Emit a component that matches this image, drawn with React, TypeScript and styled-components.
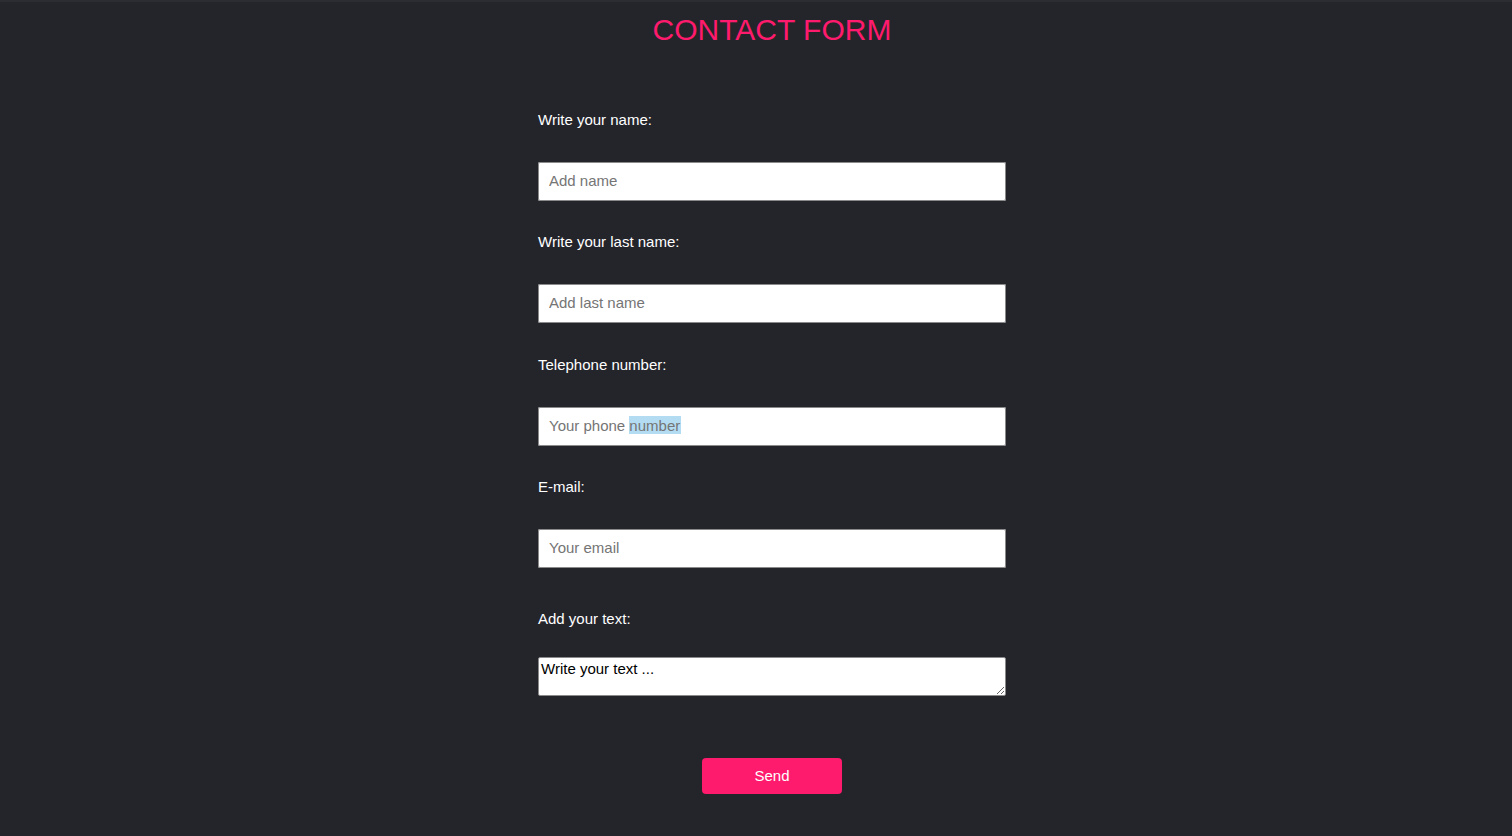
import React from "react";
import styled, { createGlobalStyle } from "styled-components";

const GlobalStyle = createGlobalStyle`
  html, body {
    margin: 0;
    padding: 0;
    background: #24252b;
  }
  body {
    font-family: "Liberation Sans", Arial, sans-serif;
    border-top: 2px solid #2b2d33;
    min-height: 834px;
  }
`;

const Page = styled.main`
  display: flex;
  flex-direction: column;
  align-items: center;
  padding-left: 32px;
`;

const Title = styled.h1`
  margin: 10px 0 0;
  font-family: "Liberation Sans", Arial, sans-serif;
  font-weight: 400;
  font-size: 30px;
  line-height: 35px;
  color: #fe1a6c;
`;

const Form = styled.form`
  width: 468px;
  margin-top: 64px;
  display: flex;
  flex-direction: column;
`;

const Field = styled.div<{ $extraTop?: number }>`
  display: flex;
  flex-direction: column;
  margin-top: ${(p) => p.$extraTop ?? 0}px;
  margin-bottom: 32.4px;
`;

const Label = styled.label<{ $gap?: number }>`
  color: #ffffff;
  font-size: 15px;
  line-height: 18px;
  margin-bottom: ${(p) => p.$gap ?? 33}px;
`;

const InputBox = styled.div`
  position: relative;
  height: 39px;
  background: #ffffff;
  border-radius: 2px;
`;

const Input = styled.input`
  position: relative;
  box-sizing: border-box;
  width: 100%;
  height: 39px;
  margin: 0;
  padding: 0 10px 2px;
  border: 1px solid #8a8a8a;
  border-radius: 2px;
  background: transparent;
  font-family: "Liberation Sans", Arial, sans-serif;
  font-size: 15px;
  color: #000;
  outline: none;
  &::placeholder {
    color: #757575;
    opacity: 1;
  }
`;

const Highlight = styled.span`
  position: absolute;
  left: 91px;
  top: 9px;
  width: 52px;
  height: 18px;
  background: #b3dcf3;
`;

const TextArea = styled.textarea`
  box-sizing: border-box;
  width: 100%;
  height: 39px;
  margin: 0;
  padding: 2px;
  border: 1px solid #8a8a8a;
  border-radius: 2px;
  background: #ffffff;
  font-family: "Liberation Sans", Arial, sans-serif;
  font-size: 15px;
  line-height: 17px;
  color: #000;
  outline: none;
  resize: vertical;
  display: block;
`;

const ButtonRow = styled.div`
  display: flex;
  justify-content: center;
  margin-top: 30px;
`;

const SendButton = styled.button`
  width: 140px;
  height: 36px;
  border: none;
  border-radius: 4px;
  background: #fe1a6c;
  color: #ffffff;
  font-family: "Liberation Sans", Arial, sans-serif;
  font-size: 15px;
  cursor: pointer;
`;

export default function App() {
  return (
    <>
      <GlobalStyle />
      <Page>
        <Title>CONTACT FORM</Title>
        <Form onSubmit={(e) => e.preventDefault()}>
          <Field>
            <Label htmlFor="name">Write your name:</Label>
            <InputBox>
              <Input id="name" placeholder="Add name" />
            </InputBox>
          </Field>
          <Field>
            <Label htmlFor="last">Write your last name:</Label>
            <InputBox>
              <Input id="last" placeholder="Add last name" />
            </InputBox>
          </Field>
          <Field>
            <Label htmlFor="phone">Telephone number:</Label>
            <InputBox>
              <Highlight />
              <Input id="phone" placeholder="Your phone number" />
            </InputBox>
          </Field>
          <Field>
            <Label htmlFor="email">E-mail:</Label>
            <InputBox>
              <Input id="email" placeholder="Your email" />
            </InputBox>
          </Field>
          <Field $extraTop={9}>
            <Label htmlFor="text" $gap={29}>Add your text:</Label>
            <TextArea id="text" defaultValue="Write your text ..." />
          </Field>
          <ButtonRow>
            <SendButton type="submit">Send</SendButton>
          </ButtonRow>
        </Form>
      </Page>
    </>
  );
}
